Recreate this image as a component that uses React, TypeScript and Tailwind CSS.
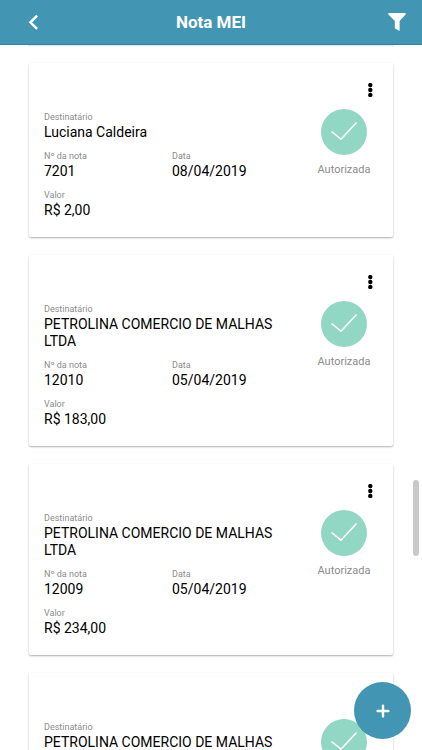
type Nota = {
  id: number;
  destinatario: string;
  numero?: string;
  data?: string;
  valor?: string;
};

const NOTAS: Nota[] = [
  { id: 1, destinatario: 'Luciana Caldeira', numero: '7201', data: '08/04/2019', valor: 'R$ 2,00' },
  { id: 2, destinatario: 'PETROLINA COMERCIO DE MALHAS LTDA', numero: '12010', data: '05/04/2019', valor: 'R$ 183,00' },
  { id: 3, destinatario: 'PETROLINA COMERCIO DE MALHAS LTDA', numero: '12009', data: '05/04/2019', valor: 'R$ 234,00' },
  { id: 4, destinatario: 'PETROLINA COMERCIO DE MALHAS LTDA' },
];

function Field({ label, value }: { label: string; value: string }) {
  return (
    <div>
      <dt className="text-[9px] leading-[14px] text-[#8c8c8c]">{label}</dt>
      <dd className="text-[14px] leading-[17px] text-black">{value}</dd>
    </div>
  );
}

function Header() {
  return (
    <header className="relative z-10 grid h-[45px] shrink-0 grid-cols-[1fr_auto_1fr] items-center border-b border-[#36809c] bg-[#4296b4] text-white">
      <button type="button" aria-label="Voltar" className="ml-7 justify-self-start">
        <svg width="12" height="16" viewBox="0 0 12 16" fill="none" stroke="currentColor" strokeWidth="2.4" className="block">
          <path d="M9.1 1.7 2.4 8.3l6.7 6.5" />
        </svg>
      </button>
      <h1 className="text-[17px] leading-5 font-bold">Nota MEI</h1>
      <button type="button" aria-label="Filtrar" className="mr-4 justify-self-end">
        <svg width="18" height="18" viewBox="0 0 18 18" fill="currentColor" className="block">
          <path d="M.4 0h17.2v1.4l-6 6.6v10l-4.8-2.8V8L.4 1.4z" />
        </svg>
      </button>
    </header>
  );
}

function NotaCard({ nota }: { nota: Nota }) {
  return (
    <article className="flex rounded-[2px] bg-white px-[15px] pb-[18px] shadow-[0_1px_2px_rgba(0,0,0,0.32)]">
      <dl className="flex min-w-0 flex-1 flex-col gap-2 pt-[47px]">
        <Field label="Destinatário" value={nota.destinatario} />
        {nota.numero && nota.data && (
          <div className="grid grid-cols-2">
            <Field label="Nº da nota" value={nota.numero} />
            <Field label="Data" value={nota.data} />
          </div>
        )}
        {nota.valor && <Field label="Valor" value={nota.valor} />}
      </dl>
      <div className="flex w-[78px] shrink-0 flex-col items-center pt-5 pl-[10px]">
        <button type="button" aria-label="Opções" className="mr-[3px] self-end">
          <svg width="10" height="14" viewBox="0 0 10 14" className="block fill-black">
            <circle cx="5.3" cy="2.1" r="2.2" />
            <circle cx="5.3" cy="7" r="2.2" />
            <circle cx="5.3" cy="11.9" r="2.2" />
          </svg>
        </button>
        <svg width="46" height="46" viewBox="0 0 46 46" className="mt-3 block">
          <circle cx="23" cy="23" r="23" className="fill-[#92d7c3]" />
          <path d="M10.5 22.5 20 30.2 35.5 13.5" fill="none" stroke="white" strokeWidth="1.5" />
        </svg>
        <p className="mt-[6px] text-[11px] leading-[17px] text-[#8c8c8c]">Autorizada</p>
      </div>
    </article>
  );
}

export default function App() {
  return (
    <div className="relative flex h-screen flex-col overflow-hidden bg-white font-['Roboto',sans-serif]">
      <Header />
      <main className="flex-1 overflow-y-auto [scrollbar-width:none]">
        {/* bottom edge of the card scrolled under the header */}
        <div className="mx-[29px] h-0 shadow-[0_0_1px_1px_rgba(0,0,0,0.12)]" />
        <div className="flex flex-col gap-[18px] px-[29px] pt-[18px]">
          {NOTAS.map(nota => (
            <NotaCard key={nota.id} nota={nota} />
          ))}
        </div>
      </main>
      <div className="absolute top-[480px] right-[3px] h-[76px] w-[6px] rounded-full bg-[#c9c9c9]" />
      <button
        type="button"
        aria-label="Nova nota"
        className="absolute right-[11px] bottom-[11px] z-10 flex h-[57px] w-[57px] items-center justify-center rounded-full bg-[#4296b4]"
      >
        <svg width="14" height="14" viewBox="0 0 14 14" fill="none" stroke="white" strokeWidth="2.4" strokeLinecap="round">
          <path d="M7 1.6v10.8M1.6 7h10.8" />
        </svg>
      </button>
    </div>
  );
}
